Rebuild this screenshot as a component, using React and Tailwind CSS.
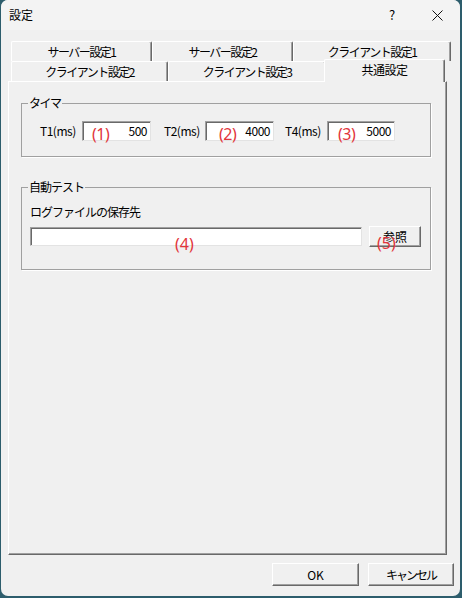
const tabBase =
  "h-full flex items-center justify-center text-[12px] leading-none tracking-[-1.5px] border-t border-l border-white border-r border-r-[#696969] shadow-[inset_-1px_0_0_#a0a0a0] rounded-t-[2px] bg-[#f0f0f0]";

function Tab({ label, w }) {
  return (
    <div className={tabBase} style={{ width: w }}>
      {label}
    </div>
  );
}

function Note({ children, className }) {
  return (
    <span className={"absolute text-[16px] leading-[20px] text-[#e2353b] font-['Noto_Sans',sans-serif] pointer-events-none " + className}>
      {children}
    </span>
  );
}

function NumBox({ value, w, note, noteLeft }) {
  return (
    <div className={"relative h-[20px] bg-white border border-t-[#a0a0a0] border-l-[#a0a0a0] border-r-[#e3e3e3] border-b-[#e3e3e3] shadow-[inset_1px_1px_0_#696969] flex items-center justify-end pr-[3px] text-[12px] tracking-[-0.5px]"+" " + w}>
      {value}
      <Note className={noteLeft + " top-[2px]"}>{note}</Note>
    </div>
  );
}

const btn =
  "flex items-center justify-center text-[12px] bg-[#f0f0f0] border border-t-white border-l-white border-r-[#696969] border-b-[#696969] shadow-[inset_-1px_-1px_0_#a0a0a0]";

export default function App() {
  return (
    <div className="w-[462px] h-[598px] bg-[#2d5d6c] pl-[1px] pr-[2px] pb-[2px] font-['Noto_Sans_CJK_JP',sans-serif] text-black">
      <div className="h-full rounded-[7px] bg-[#f0f0f0] flex flex-col overflow-hidden">
        {/* title bar */}
        <div className="h-[30px] flex items-center bg-[#f3f3f3] pl-[8px] text-[12px]">
          <span>設定</span>
          <div className="ml-auto w-[44px] h-full flex items-center justify-center text-[13px]">?</div>
          <div className="w-[46px] h-full flex items-center justify-center">
            <svg width="11" height="11" viewBox="0 0 11 11">
              <path d="M0.5 0.5 L10.5 10.5 M10.5 0.5 L0.5 10.5" stroke="#111" strokeWidth="1" />
            </svg>
          </div>
        </div>

        {/* tabs */}
        <div className="mt-[11px] ml-[10px] flex flex-col">
          <div className="flex h-[20px]">
            <Tab label="サーバー設定1" w={141} />
            <Tab label="サーバー設定2" w={141} />
            <Tab label="クライアント設定1" w={158} />
          </div>
          <div className="flex h-[20px]">
            <Tab label="クライアント設定2" w={157} />
            <Tab label="クライアント設定3" w={158} />
            <div className="relative z-10 -ml-[2px] -mt-[2px] w-[121px] h-[23px] flex items-start justify-center pt-[4px] text-[12px] leading-none tracking-[-0.5px] bg-[#f0f0f0] border-t border-l border-white border-r border-r-[#696969] shadow-[inset_-1px_0_0_#a0a0a0] rounded-t-[2px]">
              共通設定
            </div>
          </div>
        </div>

        {/* panel */}
        <div className="ml-[7px] w-[439px] h-[474px] border border-t-white border-l-white border-r-[#696969] border-b-[#696969] shadow-[inset_-1px_-1px_0_#a0a0a0]">
          <fieldset className="mt-[13px] ml-[12px] w-[410px] border border-[#a0a0a0] shadow-[1px_1px_0_#fff]">
            <legend className="ml-[6px] px-[1px] text-[12px] leading-[16px] tracking-[-1.5px]">タイマ</legend>
            <div className="pt-[10px] pb-[15px] pl-[18px] flex items-center text-[12px]">
              <span className="w-[42px] tracking-[-0.5px]">T1(ms)</span>
              <NumBox value="500" w="w-[69px]" note="(1)" noteLeft="left-[9px]" />
              <span className="ml-[13px] w-[41px] tracking-[-0.5px]">T2(ms)</span>
              <NumBox value="4000" w="w-[69px]" note="(2)" noteLeft="left-[13px]" />
              <span className="ml-[11px] w-[42px] tracking-[-0.5px]">T4(ms)</span>
              <NumBox value="5000" w="w-[68px]" note="(3)" noteLeft="left-[10px]" />
            </div>
          </fieldset>

          <fieldset className="mt-[22px] ml-[12px] w-[410px] border border-[#a0a0a0] shadow-[1px_1px_0_#fff]">
            <legend className="ml-[6px] px-[1px] text-[12px] leading-[16px] tracking-[-1px]">自動テスト</legend>
            <div className="pt-[9px] pb-[22px] pl-[8px] text-[12px]">
              <div className="leading-[16px] tracking-[-1px]">ログファイルの保存先</div>
              <div className="mt-[6px] flex items-center">
                <div className="relative w-[332px] h-[19px] bg-white border border-t-[#a0a0a0] border-l-[#a0a0a0] border-r-[#e3e3e3] border-b-[#e3e3e3] shadow-[inset_1px_1px_0_#696969]">
                  <Note className="left-[144px] top-[6px]">(4)</Note>
                </div>
                <div className="relative ml-[7px]">
                  <button className={btn + " w-[52px] h-[21px]"}>参照</button>
                  <Note className="left-[8px] top-[7px]">(5)</Note>
                </div>
              </div>
            </div>
          </fieldset>
        </div>

        {/* footer buttons */}
        <div className="mt-[8px] pr-[6px] flex justify-end gap-[9px]">
          <button className={btn + " w-[87px] h-[23px]"}>OK</button>
          <button className={btn + " w-[86px] h-[23px] tracking-[-2px]"}>キャンセル</button>
        </div>
      </div>
    </div>
  );
}
